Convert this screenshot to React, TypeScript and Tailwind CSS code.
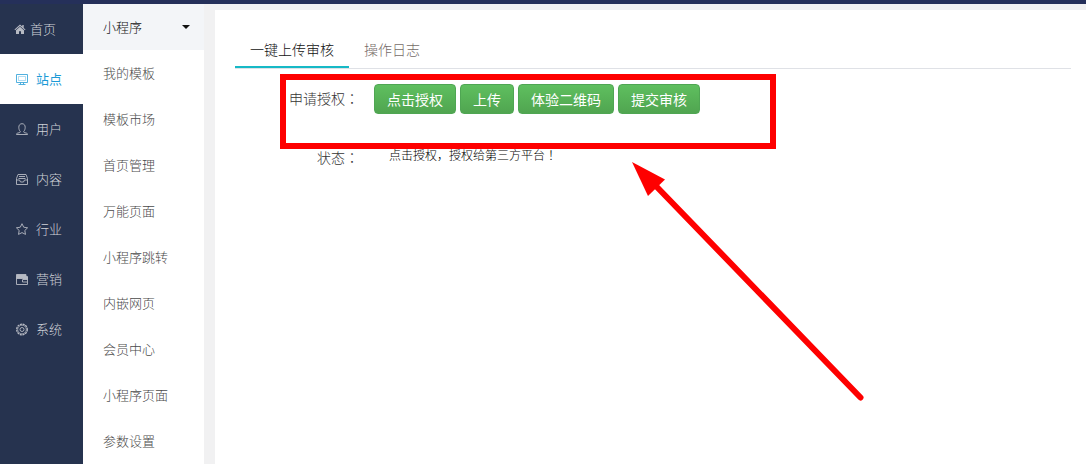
import type { ReactNode } from "react";

function Icon({ children }: { children: ReactNode }) {
  return (
    <svg
      viewBox="0 0 14 14"
      className="size-3.5 shrink-0 opacity-85"
      fill="none"
      stroke="currentColor"
      strokeWidth="0.9"
      strokeLinejoin="round"
      aria-hidden="true"
    >
      {children}
    </svg>
  );
}

const navItems: { label: string; icon: ReactNode; active?: boolean }[] = [
  {
    label: "站点",
    active: true,
    icon: (
      <>
        <path d="M1.500 2.500h11v8h-11z" />
        <path d="M3.500 4.500h7v4h-7z" strokeWidth="0.400" />
        <path d="M5.500 10.500v2M8.500 10.500v2M3.500 12.500h7" />
      </>
    ),
  },
  {
    label: "用户",
    icon: (
      <path d="M5.300 9.500C4.300 8.600 3.800 6.800 3.800 5.300 3.800 3.200 5 1.700 7 1.700s3.200 1.500 3.200 3.600c0 1.500-.5 3.300-1.500 4.200 0 .8.300 1 1 1.200l2 .5c.6.200.8.500.8 1.300h-11c0-.8.200-1.100.8-1.300l2-.5c.7-.2 1-.4 1-1.200z" />
    ),
  },
  {
    label: "内容",
    icon: (
      <>
        <path d="M3 2.500h8l1.500 4v6h-11v-6z" />
        <path d="M1.500 8h3l1 2h3l1-2h3M4 4.500h6M3.500 6.500h7" />
      </>
    ),
  },
  {
    label: "行业",
    icon: <path d="M7 1.700l1.700 3.500 3.900.6-2.800 2.700.7 3.900L7 10.600l-3.500 1.800.7-3.900-2.800-2.700 3.900-.6z" />,
  },
  {
    label: "营销",
    icon: (
      <>
        <path d="M1.500 2.500h9.500v2h1.500v3h-4.500l-1-1h-5.500z" fill="currentColor" />
        <path d="M1.500 5v7.500h11V5M7.500 7.500v2.500h5" />
      </>
    ),
  },
  {
    label: "系统",
    icon: (
      <>
        <circle cx="7" cy="7.500" r="5.300" strokeWidth="1.300" strokeDasharray="2.100 0.675" />
        <circle cx="7" cy="7.500" r="4.300" strokeWidth="0.700" />
        <circle cx="7" cy="7.500" r="2" />
      </>
    ),
  },
];

const subItems = [
  "我的模板",
  "模板市场",
  "首页管理",
  "万能页面",
  "小程序跳转",
  "内嵌网页",
  "会员中心",
  "小程序页面",
  "参数设置",
];

const actions = ["点击授权", "上传", "体验二维码", "提交审核"];

function Mark({ children }: { children: string }) {
  return <span className="font-['Noto_Sans_CJK_TC',sans-serif]">{children}</span>;
}

function FieldLabel({ children }: { children: string }) {
  return (
    <div className="flex h-7 w-[124px] shrink-0 items-center justify-end">
      <span>
        {children}
        <Mark>：</Mark>
      </span>
    </div>
  );
}

function Sidebar() {
  return (
    <nav className="w-[83px] shrink-0 bg-[#26334f] text-[13px] text-[#d0d2d8]">
      <a href="#home" className="flex h-[50px] items-center gap-1 pl-3.5">
        <svg viewBox="0 0 12 12" className="size-3 shrink-0 opacity-85" fill="currentColor" aria-hidden="true">
          <path d="M6 1.500L0.500 6.500l.6.700L6 3 10.900 7.200l.6-.7-1.800-1.600V2H8.300v1.600z" />
          <path d="M6 3.800L2 7.200V11h3V8.300h2V11h3V7.200z" />
        </svg>
        首页
      </a>
      {navItems.map((item) => (
        <a
          key={item.label}
          href={`#${item.label}`}
          className={`flex h-[50px] items-center gap-[7px] pl-[15px] ${
            item.active ? "bg-white font-normal text-[#1d9ad6]" : ""
          }`}
        >
          <Icon>{item.icon}</Icon>
          {item.label}
        </a>
      ))}
    </nav>
  );
}

function SubMenu() {
  return (
    <nav className="w-[121px] shrink-0 bg-white text-[13px] text-[#4a4a4a]">
      <button
        type="button"
        className="flex h-[46px] w-full items-center justify-between bg-[#f3f5f8] pr-3.5 pl-5 text-[#111]"
      >
        小程序
        <svg viewBox="0 0 8 4" className="h-1 w-2" fill="currentColor" aria-hidden="true">
          <path d="M0 0h8L4 4z" />
        </svg>
      </button>
      {subItems.map((label) => (
        <a key={label} href={`#${label}`} className="flex h-[46px] items-center pl-5">
          {label}
        </a>
      ))}
    </nav>
  );
}

export default function App() {
  return (
    <div className="relative flex min-h-screen flex-col bg-[#f1f1f2] font-['Noto_Sans_CJK_SC',sans-serif] font-light">
      <header className="h-1 shrink-0 bg-[#25305a]" />
      <div className="flex flex-1">
        <Sidebar />
        <SubMenu />
        <main className="mt-1.5 ml-[11px] min-w-0 flex-1 bg-white pt-5 pr-[15px] pl-5 text-sm">
          <div className="flex border-b border-[#dfe1e6]" role="tablist">
            <button
              type="button"
              role="tab"
              aria-selected="true"
              className="h-[38px] border-b-2 border-[#17b9c6] px-[15px] pt-0.5 text-[#111]"
            >
              一键上传审核
            </button>
            <button
              type="button"
              role="tab"
              aria-selected="false"
              className="h-[38px] border-b-2 border-transparent px-[15px] pt-0.5 text-[#756b67]"
            >
              操作日志
            </button>
          </div>
          <div className="mt-[15px] flex text-[#333]">
            <FieldLabel>申请授权</FieldLabel>
            <div className="ml-[15px] flex gap-1">
              {actions.map((label) => (
                <button
                  key={label}
                  type="button"
                  className="h-[30px] rounded border border-[#4fa653] bg-linear-to-b from-[#5fbf5f] to-[#50a550] px-3 font-normal text-white"
                >
                  {label}
                </button>
              ))}
            </div>
          </div>
          <div className="mt-[29px] flex text-[#333]">
            <FieldLabel>状态</FieldLabel>
            <p className="ml-[30px] text-xs leading-6 text-black">
              点击授权，授权给第三方平台<Mark>！</Mark>
            </p>
          </div>
        </main>
      </div>
      <div className="pointer-events-none absolute top-[74px] left-[280px] h-[75px] w-[496px] border-6 border-[#fe0000]" />
      <svg
        viewBox="0 0 234 242"
        className="pointer-events-none absolute top-[161px] left-[631px] h-[242px] w-[234px]"
        aria-hidden="true"
      >
        <path d="M24 24L229.500 236.500" stroke="#fe0000" strokeWidth="6" strokeLinecap="round" />
        <path d="M1 1l33 17.500-17 16.500z" fill="#fe0000" />
      </svg>
    </div>
  );
}
